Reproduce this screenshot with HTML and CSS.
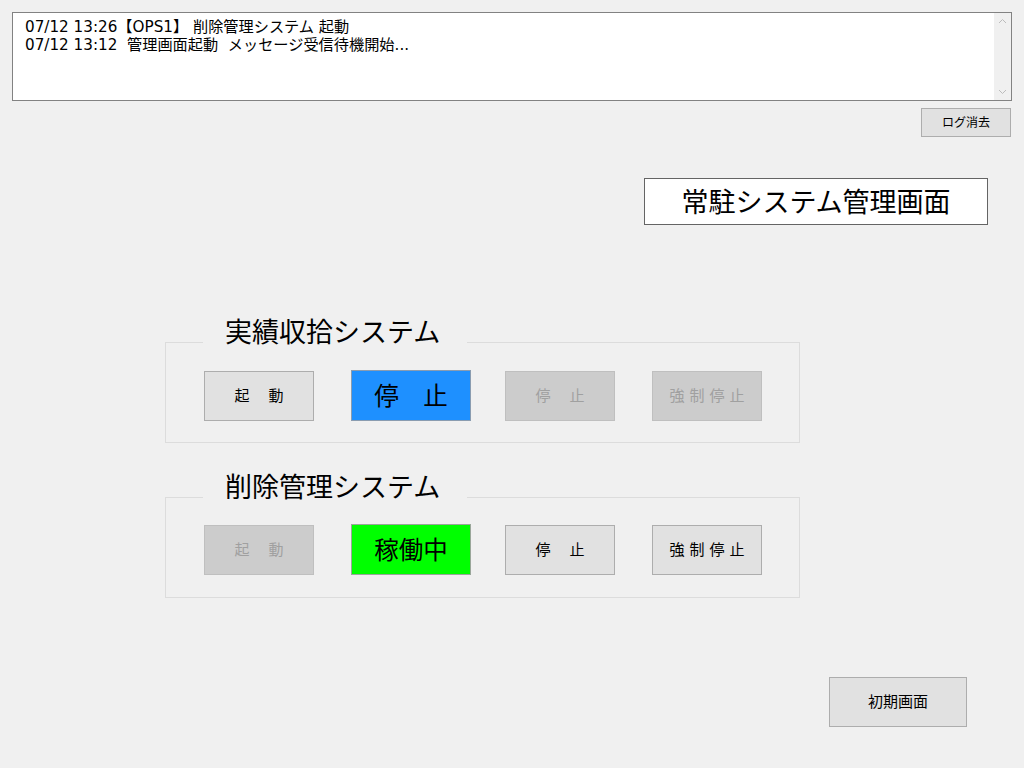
FILE: index.html
```html
<!DOCTYPE html>
<html lang="ja">
<head>
<meta charset="utf-8">
<title>常駐システム管理画面</title>
<link rel="stylesheet" href="styles.css">
</head>
<body>
<div class="log">
  <div class="log-text">
    <div class="log-line">07/12 13:26【OPS1】 削除管理システム 起動</div>
    <div class="log-line">07/12 13:12  管理画面起動  メッセージ受信待機開始...</div>
  </div>
  <div class="scrollbar">
    <svg class="arrow" width="17" height="17" viewBox="0 0 17 17"><path d="M5 10 L8.5 6.5 L12 10" fill="none" stroke="#bcbcbc" stroke-width="1"/></svg>
    <svg class="arrow" width="17" height="17" viewBox="0 0 17 17"><path d="M5 7 L8.5 10.5 L12 7" fill="none" stroke="#bcbcbc" stroke-width="1"/></svg>
  </div>
</div>
<div class="toolbar">
  <button class="btn btn-clear">ログ消去</button>
</div>
<div class="title-row">
  <div class="title">常駐システム管理画面</div>
</div>

<fieldset class="group group-first">
  <legend class="group-title">実績収拾システム</legend>
  <div class="controls">
    <button class="btn btn-cmd spaced2">起　動</button>
    <div class="status status-stop">停　止</div>
    <button class="btn btn-cmd btn-disabled spaced2">停　止</button>
    <button class="btn btn-cmd btn-disabled spaced5">強制停止</button>
  </div>
</fieldset>

<fieldset class="group group-second">
  <legend class="group-title">削除管理システム</legend>
  <div class="controls">
    <button class="btn btn-cmd btn-disabled spaced2">起　動</button>
    <div class="status status-run">稼働中</div>
    <button class="btn btn-cmd spaced2">停　止</button>
    <button class="btn btn-cmd spaced5">強制停止</button>
  </div>
</fieldset>

<div class="footer">
  <button class="btn btn-home">初期画面</button>
</div>
</body>
</html>
```
FILE: styles.css
```css
html, body {
  margin: 0;
  padding: 0;
}
body {
  width: 1024px;
  height: 768px;
  background: #f0f0f0;
  font-family: "Noto Sans CJK JP", "Noto Sans", sans-serif;
  color: #000;
  padding: 12px 0 0 0;
  box-sizing: border-box;
  overflow: hidden;
}
.log {
  margin-left: 12px;
  width: 1000px;
  height: 89px;
  box-sizing: border-box;
  border: 1px solid #828282;
  background: #fff;
  display: flex;
}
.log-text {
  flex: 1;
  padding: 5px 0 0 12px;
  font-family: "DejaVu Sans", "Noto Sans CJK JP", sans-serif;
  font-size: 15.2px;
  line-height: 18px;
}
.log-line {
  white-space: pre;
}
.scrollbar {
  width: 17px;
  background: #f0f0f0;
  display: flex;
  flex-direction: column;
  justify-content: space-between;
}
.arrow {
  display: block;
}
.toolbar {
  display: flex;
  justify-content: flex-end;
  padding-right: 13px;
  margin-top: 7px;
}
.btn {
  font-family: "Noto Sans CJK JP", "Noto Sans", sans-serif;
  background: #e1e1e1;
  border: 1px solid #adadad;
  color: #000;
  padding: 0;
  margin: 0;
  box-sizing: border-box;
  display: flex;
  align-items: center;
  justify-content: center;
}
.btn-clear {
  width: 90px;
  height: 29px;
  font-size: 12px;
  padding-bottom: 2px;
}
.title-row {
  display: flex;
  justify-content: flex-end;
  padding-right: 36px;
  margin-top: 41px;
}
.title {
  width: 344px;
  height: 47px;
  box-sizing: border-box;
  border: 1px solid #646464;
  background: #fff;
  font-size: 27px;
  display: flex;
  align-items: center;
  justify-content: center;
  padding: 0 0 2px 0;
}
.group {
  margin: 0 0 0 165px;
  width: 635px;
  box-sizing: border-box;
  border: 1px solid #dcdcdc;
  padding: 3px 0 21px 0;
  min-width: 0;
}
.group-first {
  margin-top: 92px;
}
.group-second {
  margin-top: 29px;
  padding-top: 2px;
  padding-bottom: 22px;
}
.group-title {
  margin-left: 37px;
  width: 264px;
  box-sizing: border-box;
  padding: 0 0 22px 22px;
  font-size: 27px;
  line-height: 28px;
}
.controls {
  display: flex;
  align-items: center;
  gap: 37px;
  padding-left: 38px;
  height: 51px;
}
.btn-cmd {
  width: 110px;
  height: 50px;
  font-size: 15px;
  padding-bottom: 2px;
}
.spaced2 {
  letter-spacing: 2px;
  text-indent: 2px;
}
.spaced5 {
  letter-spacing: 5px;
  text-indent: 5px;
}
.btn-disabled {
  background: #cccccc;
  border-color: #bfbfbf;
  color: #a0a0a0;
}
.status {
  width: 120px;
  height: 51px;
  margin-right: -3px;
  box-sizing: border-box;
  border: 1px solid #9a9a9a;
  font-size: 24.5px;
  display: flex;
  align-items: center;
  justify-content: center;
  padding-bottom: 2px;
}
.status-stop {
  background: #1e90ff;
  border-color: #8a9cb0;
}
.status-run {
  background: #00ff00;
  border-color: #9aa69a;
}
.footer {
  display: flex;
  justify-content: flex-end;
  padding-right: 57px;
  margin-top: 79px;
}
.btn-home {
  width: 138px;
  height: 50px;
  font-size: 15px;
  padding-bottom: 3px;
}
```
